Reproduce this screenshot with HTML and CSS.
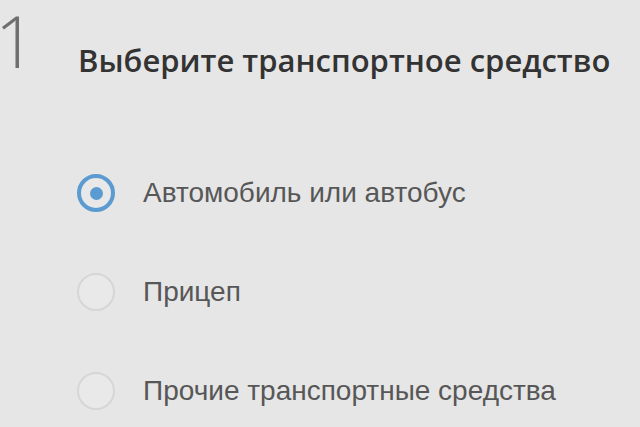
FILE: index.html
```html
<!DOCTYPE html>
<html lang="ru">
<head>
<meta charset="utf-8">
<title>Шаг 1</title>
<link rel="stylesheet" href="styles.css">
</head>
<body>
<section class="step">
  <div class="step-num">1</div>
  <div class="step-body">
    <h2 class="step-title">Выберите транспортное средство</h2>
    <ul class="options">
      <li class="option option-checked"><span class="radio"></span><span class="option-label">Автомобиль или автобус</span></li>
      <li class="option"><span class="radio"></span><span class="option-label">Прицеп</span></li>
      <li class="option"><span class="radio"></span><span class="option-label">Прочие транспортные средства</span></li>
    </ul>
  </div>
</section>
</body>
</html>
```
FILE: styles.css
```css
html, body {
  margin: 0;
  padding: 0;
  background: #e6e6e6;
  overflow: hidden;
}

.step {
  display: flex;
  align-items: flex-start;
}

.step-num {
  width: 73px;
  margin-left: -5px;
  font-family: "Open Sans", sans-serif;
  font-weight: 300;
  font-size: 72px;
  line-height: 80px;
  color: #6f6f6f;
  flex-shrink: 0;
}

.step-body {
  padding-left: 9px;
}

.step-title {
  margin: 38px 0 0;
  font-family: "Open Sans", sans-serif;
  font-weight: 600;
  font-size: 31px;
  line-height: 44px;
  color: #333;
  margin-left: 1px;
}

.options {
  list-style: none;
  margin: 92px 0 0;
  padding: 0;
  display: flex;
  flex-direction: column;
  gap: 61px;
}

.option {
  display: flex;
  align-items: center;
  height: 38px;
}

.radio {
  box-sizing: border-box;
  width: 38px;
  height: 38px;
  border-radius: 50%;
  border: 2px solid #d6d6d6;
  background: #e9e9e9;
  flex-shrink: 0;
  display: flex;
  align-items: center;
  justify-content: center;
}

.option-checked .radio {
  border: 4px solid #5b9bd1;
  background: #e8e8e8;
}

.option-checked .radio::after {
  content: "";
  width: 13px;
  height: 13px;
  border-radius: 50%;
  background: #5b9bd1;
}

.option-label {
  margin-left: 28px;
  font-family: "Liberation Sans", Arial, sans-serif;
  font-size: 28px;
  color: #575757;
}
```
